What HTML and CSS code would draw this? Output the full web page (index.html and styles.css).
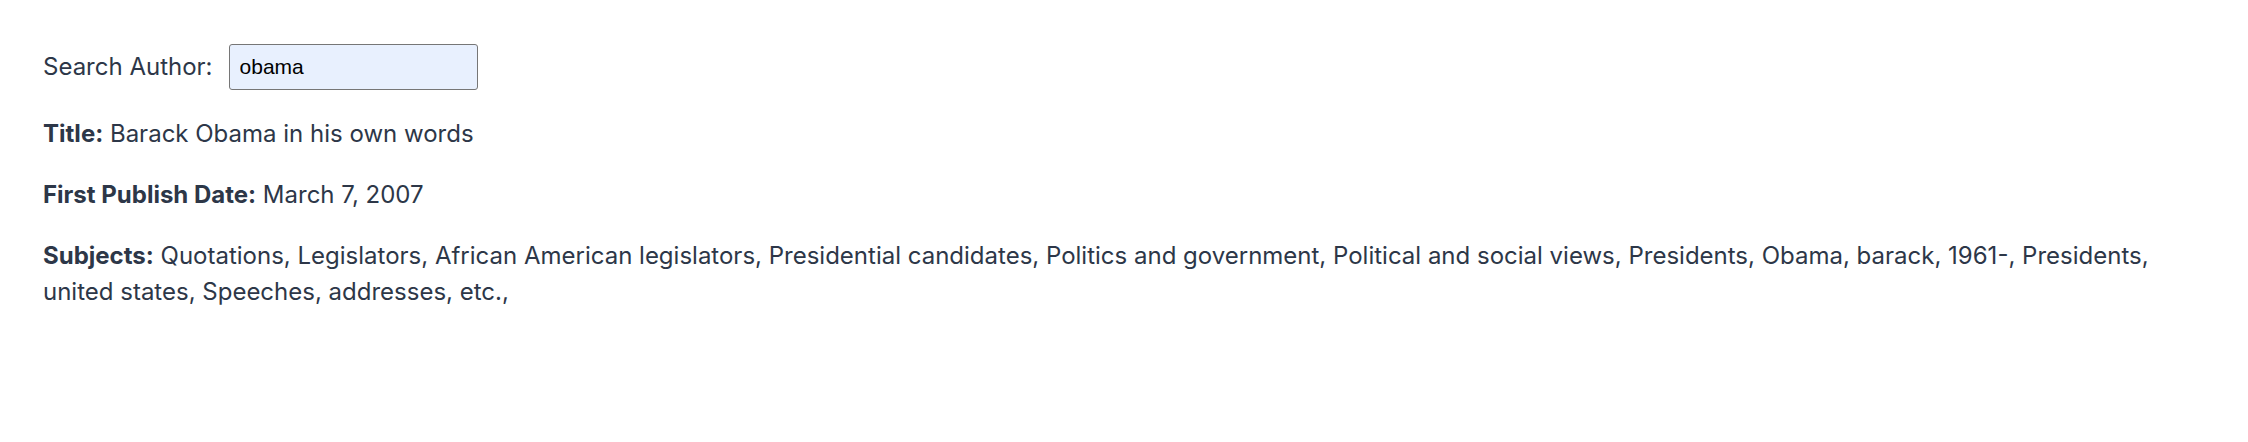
FILE: index.html
```html
<!DOCTYPE html>
<html lang="en">
<head>
<meta charset="utf-8">
<title>Author Search</title>
<link rel="stylesheet" href="styles.css">
</head>
<body>
<main class="page">
  <div class="search-row">
    <label class="search-label" for="author">Search Author:</label>
    <input class="search-input" id="author" type="text" value="obama">
  </div>
  <p class="field"><b>Title:</b> Barack Obama in his own words</p>
  <p class="field"><b>First Publish Date:</b> March 7, 2007</p>
  <p class="field"><b>Subjects:</b> Quotations, Legislators, African American legislators, Presidential candidates, Politics and government, Political and social views, Presidents, Obama, barack, 1961-, Presidents, united states, Speeches, addresses, etc.,</p>
</main>
</body>
</html>
```
FILE: styles.css
```css
html, body {
  margin: 0;
  background: #ffffff;
}

.page {
  padding: 44px 43px;
  font-family: Inter, "Noto Sans", sans-serif;
  font-size: 24px;
  line-height: 36px;
  color: #2d3748;
}

.search-row {
  display: flex;
  align-items: center;
  gap: 16px;
}

.search-label {
  white-space: nowrap;
}

.search-input {
  box-sizing: border-box;
  width: 249px;
  height: 46px;
  margin: 0;
  padding: 0 10px;
  border: 1px solid #767676;
  border-radius: 3px;
  background: #e8f0fe;
  font-family: "Liberation Sans", Arial, sans-serif;
  font-size: 21px;
  color: #000000;
  outline: none;
}

.field {
  margin: 26px 0 0;
}

.field + .field {
  margin-top: 25px;
}

.field b {
  font-weight: 700;
}
```
